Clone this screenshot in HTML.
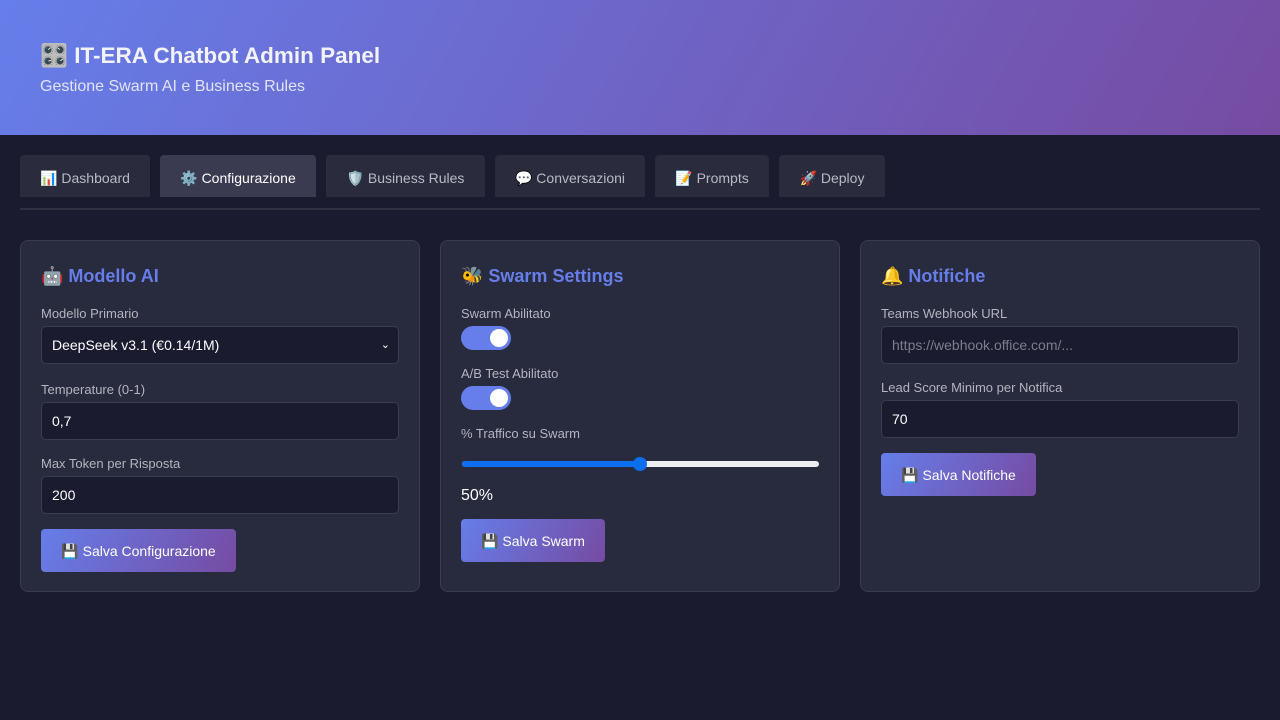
<!DOCTYPE html>
<html><head><meta charset="utf-8"><style>
*{box-sizing:border-box;margin:0;padding:0}
body{width:1280px;height:720px;background:#1a1b2e;font-family:"Liberation Sans","DejaVu Sans",sans-serif;position:relative;overflow:hidden;color:#fff}
.hdr{position:absolute;left:0;top:0;width:1280px;height:135px;background:linear-gradient(120deg,#667eea,#764ba2)}
.hdr h1{position:absolute;left:40px;top:43px;font-size:22.5px;font-weight:bold;color:#f2f2f8}
.hdr p{position:absolute;left:40px;top:78px;font-size:16px;color:#e2e4f6}
.tab{position:absolute;top:155px;height:42px;background:#2a2b3d;border-radius:4px 4px 0 0;color:#b9bac6;font-size:14px;line-height:46px;text-align:center}
.tab.a{background:#3a3b50;color:#fff}
.line{position:absolute;left:20px;top:208px;width:1240px;height:2px;background:#2f3040}
.card{position:absolute;top:240px;width:400px;height:352px;background:#282a3d;border:1px solid #3a3c50;border-radius:8px}
.card h3{position:absolute;left:20px;top:25px;font-size:18px;color:#667eea;font-weight:bold}
.lb{position:absolute;left:20px;font-size:13px;color:#b4b5c0}
.in{position:absolute;left:20px;width:358px;height:38px;background:#1a1b2e;border:1px solid #3a3c50;border-radius:5px;font-size:14px;line-height:36px;padding-left:10px;color:#fff}
.btn{position:absolute;left:20px;height:43px;border-radius:4px;background:linear-gradient(120deg,#667eea,#764ba2);font-size:14px;line-height:45px;text-align:center;color:#fff}
.tg{position:absolute;left:20px;width:50px;height:24px;border-radius:12px;background:#667eea}
.tg:after{content:"";position:absolute;right:3px;top:3px;width:18px;height:18px;border-radius:50%;background:#fff}
</style></head><body>
<div class="hdr"><h1>🎛️ IT-ERA Chatbot Admin Panel</h1><p>Gestione Swarm AI e Business Rules</p></div>
<div class="tab" style="left:20px;width:130px">📊 Dashboard</div>
<div class="tab a" style="left:160px;width:156px">⚙️ Configurazione</div>
<div class="tab" style="left:326px;width:159px">🛡️ Business Rules</div>
<div class="tab" style="left:495px;width:150px">💬 Conversazioni</div>
<div class="tab" style="left:655px;width:114px">📝 Prompts</div>
<div class="tab" style="left:779px;width:106px">🚀 Deploy</div>
<div class="line"></div>

<div class="card" style="left:20px">
<h3>🤖 Modello AI</h3>
<div class="lb" style="top:65px">Modello Primario</div>
<div class="in" style="top:85px">DeepSeek v3.1 (€0.14/1M)<span style="position:absolute;right:8px;font-size:11px">⌄</span></div>
<div class="lb" style="top:141px">Temperature (0-1)</div>
<div class="in" style="top:161px">0,7</div>
<div class="lb" style="top:215px">Max Token per Risposta</div>
<div class="in" style="top:235px">200</div>
<div class="btn" style="top:288px;width:195px">💾 Salva Configurazione</div>
</div>

<div class="card" style="left:440px">
<h3>🐝 Swarm Settings</h3>
<div class="lb" style="top:65px">Swarm Abilitato</div>
<div class="tg" style="top:85px"></div>
<div class="lb" style="top:125px">A/B Test Abilitato</div>
<div class="tg" style="top:145px"></div>
<div class="lb" style="top:185px">% Traffico su Swarm</div>
<div style="position:absolute;left:21px;top:220px;width:357px;height:6px;border-radius:3px;background:#eee"></div>
<div style="position:absolute;left:21px;top:220px;width:178px;height:6px;border-radius:3px;background:#0b6ff0"></div>
<div style="position:absolute;left:192px;top:216px;width:14px;height:14px;border-radius:50%;background:#0b6ff0"></div>
<div style="position:absolute;left:20px;top:246px;font-size:16px">50%</div>
<div class="btn" style="top:278px;width:144px">💾 Salva Swarm</div>
</div>

<div class="card" style="left:860px">
<h3>🔔 Notifiche</h3>
<div class="lb" style="top:65px">Teams Webhook URL</div>
<div class="in" style="top:85px;color:#7d7e8c">https://webhook.office.com/...</div>
<div class="lb" style="top:139px">Lead Score Minimo per Notifica</div>
<div class="in" style="top:159px">70</div>
<div class="btn" style="top:212px;width:155px">💾 Salva Notifiche</div>
</div>
</body></html>
